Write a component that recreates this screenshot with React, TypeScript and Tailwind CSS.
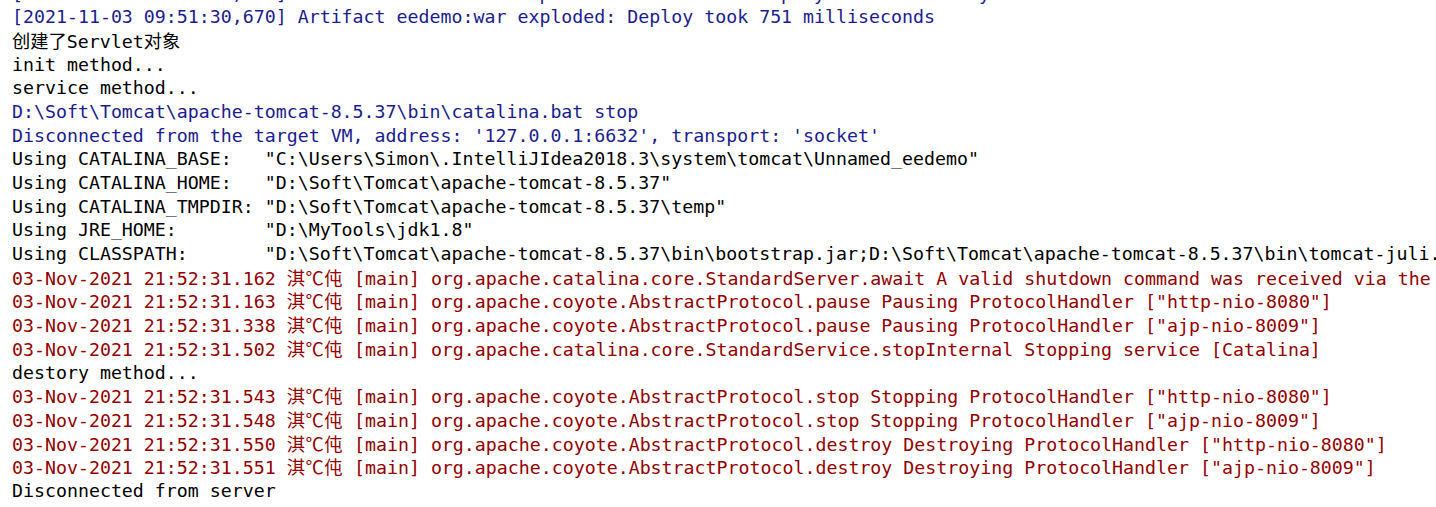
import React from 'react';

type Line = { text: React.ReactNode; tone: 'info' | 'out' | 'err' };

const ts = (t: string, rest: string): React.ReactNode => (
  <>
    03-Nov-2021 {t} <span className="font-['Noto_Sans_CJK_SC',sans-serif] tracking-[0.5px]">淇℃伅</span> [main] {rest}
  </>
);

const lines: Line[] = [
  { tone: 'info', text: '[2021-11-03 09:51:30,574] Artifact eedemo:war exploded: Artifact is deployed successfully' },
  { tone: 'info', text: '[2021-11-03 09:51:30,670] Artifact eedemo:war exploded: Deploy took 751 milliseconds' },
  {
    tone: 'out',
    text: (
      <>
        <span className="font-['Noto_Sans_CJK_SC',sans-serif]">创建了</span>Servlet
        <span className="font-['Noto_Sans_CJK_SC',sans-serif]">对象</span>
      </>
    ),
  },
  { tone: 'out', text: 'init method...' },
  { tone: 'out', text: 'service method...' },
  { tone: 'info', text: 'D:\\Soft\\Tomcat\\apache-tomcat-8.5.37\\bin\\catalina.bat stop' },
  { tone: 'info', text: "Disconnected from the target VM, address: '127.0.0.1:6632', transport: 'socket'" },
  { tone: 'out', text: 'Using CATALINA_BASE:   "C:\\Users\\Simon\\.IntelliJIdea2018.3\\system\\tomcat\\Unnamed_eedemo"' },
  { tone: 'out', text: 'Using CATALINA_HOME:   "D:\\Soft\\Tomcat\\apache-tomcat-8.5.37"' },
  { tone: 'out', text: 'Using CATALINA_TMPDIR: "D:\\Soft\\Tomcat\\apache-tomcat-8.5.37\\temp"' },
  { tone: 'out', text: 'Using JRE_HOME:        "D:\\MyTools\\jdk1.8"' },
  {
    tone: 'out',
    text: 'Using CLASSPATH:       "D:\\Soft\\Tomcat\\apache-tomcat-8.5.37\\bin\\bootstrap.jar;D:\\Soft\\Tomcat\\apache-tomcat-8.5.37\\bin\\tomcat-juli.jar"',
  },
  { tone: 'err', text: ts('21:52:31.162', 'org.apache.catalina.core.StandardServer.await A valid shutdown command was received via the shutdown port. Stopping the Server instance.') },
  { tone: 'err', text: ts('21:52:31.163', 'org.apache.coyote.AbstractProtocol.pause Pausing ProtocolHandler ["http-nio-8080"]') },
  { tone: 'err', text: ts('21:52:31.338', 'org.apache.coyote.AbstractProtocol.pause Pausing ProtocolHandler ["ajp-nio-8009"]') },
  { tone: 'err', text: ts('21:52:31.502', 'org.apache.catalina.core.StandardService.stopInternal Stopping service [Catalina]') },
  { tone: 'out', text: 'destory method...' },
  { tone: 'err', text: ts('21:52:31.543', 'org.apache.coyote.AbstractProtocol.stop Stopping ProtocolHandler ["http-nio-8080"]') },
  { tone: 'err', text: ts('21:52:31.548', 'org.apache.coyote.AbstractProtocol.stop Stopping ProtocolHandler ["ajp-nio-8009"]') },
  { tone: 'err', text: ts('21:52:31.550', 'org.apache.coyote.AbstractProtocol.destroy Destroying ProtocolHandler ["http-nio-8080"]') },
  { tone: 'err', text: ts('21:52:31.551', 'org.apache.coyote.AbstractProtocol.destroy Destroying ProtocolHandler ["ajp-nio-8009"]') },
  { tone: 'out', text: 'Disconnected from server' },
];

const toneClass: Record<Line['tone'], string> = {
  info: 'text-[#1c1c8e]',
  out: 'text-black',
  err: 'text-[#930000]',
};

const App: React.FC = () => {
  return (
    <div className="w-[1436px] h-[507px] overflow-hidden bg-white">
      {/* Console output */}
      <div className="-mt-[18.5px] pl-3 font-['DejaVu_Sans_Mono','Noto_Sans_CJK_SC',monospace] text-[18.25px] leading-[23.7px]">
        {lines.map((l, i) => (
          <div key={i} className={`h-[23.7px] whitespace-pre ${toneClass[l.tone]}`}>
            {l.text}
          </div>
        ))}
      </div>
    </div>
  );
};

export default App;
